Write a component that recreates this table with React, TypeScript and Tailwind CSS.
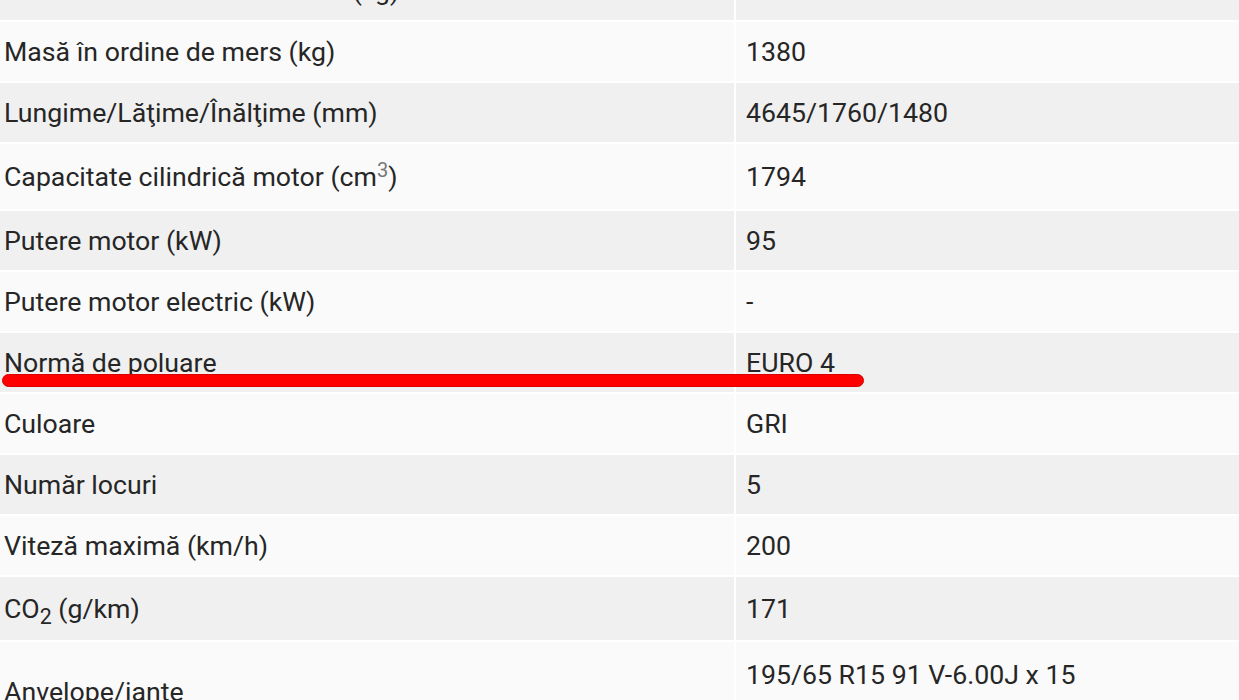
import React from 'react';

type Row = {
  label: React.ReactNode;
  value: React.ReactNode;
  height: string;
  top?: boolean;
};

const rows: Row[] = [
  { label: 'Masă maximă tehnic admisă (kg)', value: '1860', height: 'h-[59px]' },
  { label: 'Masă în ordine de mers (kg)', value: '1380', height: 'h-[59px]' },
  { label: 'Lungime/Lăţime/Înălţime (mm)', value: '4645/1760/1480', height: 'h-[59px]' },
  {
    label: (
      <>
        Capacitate cilindrică motor (cm
        <span className="relative -top-[0.45em] text-[0.75em] leading-none text-[#777]">3</span>)
      </>
    ),
    value: '1794',
    height: 'h-[65px]',
  },
  { label: 'Putere motor (kW)', value: '95', height: 'h-[59px]' },
  { label: 'Putere motor electric (kW)', value: '-', height: 'h-[59px]' },
  { label: 'Normă de poluare', value: 'EURO 4', height: 'h-[59px]' },
  { label: 'Culoare', value: 'GRI', height: 'h-[59px]' },
  { label: 'Număr locuri', value: '5', height: 'h-[59px]' },
  { label: 'Viteză maximă (km/h)', value: '200', height: 'h-[59px]' },
  {
    label: (
      <>
        CO<span className="relative top-[0.3em] text-[0.8em] leading-none">2</span> (g/km)
      </>
    ),
    value: '171',
    height: 'h-[63px]',
  },
  {
    label: 'Anvelope/iante',
    value: '195/65 R15 91 V-6.00J x 15',
    height: 'h-[100px]',
    top: true,
  },
];

export default function App() {
  return (
    <div className="relative h-[700px] w-[1239px] overflow-hidden bg-white font-['Roboto',sans-serif] text-[26.7px] text-[#262626]">
      {/* Spec table */}
      <div className="-mt-[39px] flex flex-col gap-[2px]">
        {rows.map((row, i) => (
          <div key={i} className={`flex gap-[2px] ${row.height}`}>
            <div
              className={`flex w-[734px] shrink-0 items-center pl-[4px] ${i % 2 === 0 ? 'bg-[#f0f0f0]' : 'bg-[#fafafa]'}`}
            >
              <span className="leading-[36px]">{row.label}</span>
            </div>
            <div
              className={`flex flex-1 pl-[10px] ${row.top ? 'items-start pt-[15px]' : 'items-center'} ${i % 2 === 0 ? 'bg-[#f0f0f0]' : 'bg-[#fafafa]'}`}
            >
              <span className="leading-[36px]">{row.value}</span>
            </div>
          </div>
        ))}
      </div>

      {/* Red marker stroke */}
      <div className="absolute left-[2px] top-[374px] h-[13px] w-[862px] rounded-full border border-[#d80000] bg-[#ff0000]" />
    </div>
  );
}
